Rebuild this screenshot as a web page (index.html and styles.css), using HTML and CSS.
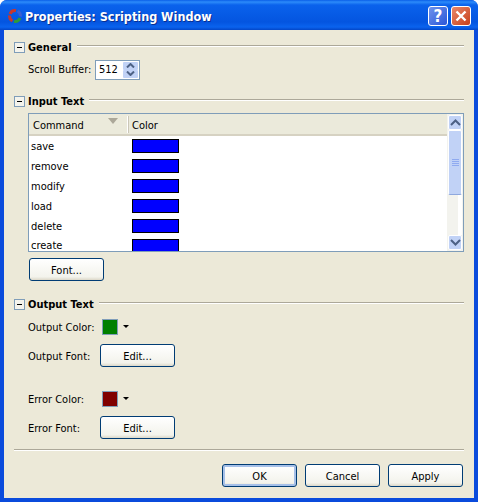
FILE: index.html
```html
<!DOCTYPE html>
<html lang="en">
<head>
    <meta charset="UTF-8">
    <meta name="viewport" content="width=device-width, initial-scale=1.0">
    <title>Properties: Scripting Window</title>
    <link rel="stylesheet" href="styles.css">
</head>
<body>
    <div class="window">
        <div class="titlebar">
            <svg class="app-icon" width="16" height="16" viewBox="0 0 16 16">
                <path d="M3 6 A5.5 5.5 0 0 1 9 2.6" fill="none" stroke="#c8372c" stroke-width="3"/>
                <path d="M10.5 3 A5.5 5.5 0 0 1 13.4 8.5" fill="none" stroke="#3a5fd0" stroke-width="3"/>
                <path d="M13 10 A5.5 5.5 0 0 1 7 13.4" fill="none" stroke="#2f9a3c" stroke-width="3"/>
                <path d="M5.5 13 A5.5 5.5 0 0 1 2.6 7.5" fill="none" stroke="#c8372c" stroke-width="3"/>
            </svg>
            <span class="title">Properties: Scripting Window</span>
            <div class="title-btn help">?</div>
            <div class="title-btn close">
                <svg width="12" height="12" viewBox="0 0 12 12">
                    <path d="M1.5 1.5 L10.5 10.5 M10.5 1.5 L1.5 10.5" stroke="#fff" stroke-width="2.4"/>
                </svg>
            </div>
        </div>

        <div class="content">
            <div class="section-head first">
                <span class="toggle"></span>
                <b>General</b>
                <span class="rule"></span>
            </div>
            <div class="row scroll-row">
                <span class="scroll-label">Scroll Buffer:</span>
                <div class="spinner">
                    <span class="spin-value">512</span>
                    <div class="spin-btns">
                        <span class="spin-btn">
                            <svg width="9" height="5" viewBox="0 0 9 5"><path d="M1 4.5 L4.5 1 L8 4.5" fill="none" stroke="#4d6185" stroke-width="2"/></svg>
                        </span>
                        <span class="spin-btn">
                            <svg width="9" height="5" viewBox="0 0 9 5"><path d="M1 .5 L4.5 4 L8 .5" fill="none" stroke="#4d6185" stroke-width="2"/></svg>
                        </span>
                    </div>
                </div>
            </div>

            <div class="section-head input-head">
                <span class="toggle"></span>
                <b>Input Text</b>
                <span class="rule"></span>
            </div>
            <div class="table">
                <div class="table-main">
                    <div class="table-header">
                        <div class="col-command">Command<span class="sort-arrow"></span></div>
                        <div class="col-color">Color</div>
                    </div>
                    <div class="table-rows">
                        <div class="table-row"><span class="cmd">save</span><span class="swatch-blue"></span></div>
                        <div class="table-row"><span class="cmd">remove</span><span class="swatch-blue"></span></div>
                        <div class="table-row"><span class="cmd">modify</span><span class="swatch-blue"></span></div>
                        <div class="table-row"><span class="cmd">load</span><span class="swatch-blue"></span></div>
                        <div class="table-row"><span class="cmd">delete</span><span class="swatch-blue"></span></div>
                        <div class="table-row last-row"><span class="cmd">create</span><span class="swatch-blue"></span></div>
                    </div>
                </div>
                <div class="scrollbar">
                    <span class="sb-btn">
                        <svg width="11" height="7" viewBox="0 0 11 7"><path d="M1 6 L5.5 1.5 L10 6" fill="none" stroke="#4d6185" stroke-width="2"/></svg>
                    </span>
                    <span class="sb-thumb">
                        <span class="grip"></span><span class="grip"></span><span class="grip"></span><span class="grip"></span>
                    </span>
                    <span class="sb-track"></span>
                    <span class="sb-btn">
                        <svg width="11" height="7" viewBox="0 0 11 7"><path d="M1 1 L5.5 5.5 L10 1" fill="none" stroke="#4d6185" stroke-width="2"/></svg>
                    </span>
                </div>
            </div>
            <div class="font-row">
                <button class="btn">Font...</button>
            </div>

            <div class="section-head output-head">
                <span class="toggle"></span>
                <b>Output Text</b>
                <span class="rule"></span>
            </div>
            <div class="row color-row output-color">
                <span class="label">Output Color:</span>
                <span class="color-box green"></span>
                <span class="caret"></span>
            </div>
            <div class="row btn-row">
                <span class="label">Output Font:</span>
                <button class="btn">Edit...</button>
            </div>
            <div class="row color-row error-color">
                <span class="label">Error Color:</span>
                <span class="color-box red"></span>
                <span class="caret"></span>
            </div>
            <div class="row btn-row">
                <span class="label">Error Font:</span>
                <button class="btn">Edit...</button>
            </div>

            <div class="separator"></div>
            <div class="footer">
                <button class="btn default">OK</button>
                <button class="btn">Cancel</button>
                <button class="btn">Apply</button>
            </div>
        </div>
    </div>
</body>
</html>
```

FILE: styles.css
```css
* {
    box-sizing: border-box;
}

body {
    margin: 0;
    font-family: "DejaVu Sans Condensed", "DejaVu Sans", sans-serif;
    font-stretch: condensed;
    font-size: 11px;
    color: #000;
}

.window {
    width: 478px;
    height: 502px;
    display: flex;
    flex-direction: column;
    background: #0a4bdc;
    padding: 0 4px 4px;
    border-radius: 7px 7px 0 0;
    overflow: hidden;
}

.titlebar {
    height: 30px;
    margin: 0 -4px;
    padding: 2px 7px 0 7px;
    display: flex;
    align-items: center;
    background: linear-gradient(#0a5fe8 0, #2c8bfa 2px, #0a62ec 5px, #0455e0 22px, #0a63ee 27px, #0346c8 30px);
}

.app-icon {
    margin-right: 2px;
    flex: none;
}

.title {
    flex: 1;
    color: #fff;
    font-weight: bold;
    font-size: 12.5px;
    text-shadow: 1px 1px 0 #0a2f90;
}

.title-btn {
    width: 20px;
    height: 20px;
    margin-left: 3px;
    border: 1px solid #fff;
    border-radius: 3px;
    display: flex;
    align-items: center;
    justify-content: center;
    color: #fff;
    font-weight: bold;
    font-size: 17px;
}

.help {
    background: linear-gradient(135deg, #6f93ec, #2a56d8);
}

.close {
    background: linear-gradient(135deg, #e9876a, #c8401a);
}

.content {
    flex: 1;
    background: #ece9d8;
    padding: 0 10px;
    display: flex;
    flex-direction: column;
}

.section-head {
    height: 14px;
    display: flex;
    align-items: center;
}

.section-head b {
    margin-left: 3px;
    margin-right: 5px;
    font-size: 11px;
}

.section-head.first {
    margin-top: 10px;
}

.input-head {
    margin-top: 14px;
}

.output-head {
    margin-top: 16px;
}

.toggle {
    width: 11px;
    height: 11px;
    flex: none;
    border: 1px solid #7f9db9;
    background: linear-gradient(transparent 4px, #000 4px, #000 5px, transparent 5px) 2px 0 / 5px 100% no-repeat, #f4f3ec;
}

.rule {
    flex: 1;
    height: 2px;
    margin-top: -3px;
    border-top: 1px solid #aca899;
    border-bottom: 1px solid #fff;
}

.row {
    display: flex;
    align-items: center;
    padding-left: 14px;
}

.scroll-row {
    margin-top: 5px;
    height: 21px;
}

.scroll-label {
    width: 67px;
    flex: none;
    margin-top: -1px;
}

.spinner {
    width: 45px;
    height: 20px;
    border: 1px solid #7f9db9;
    background: #fff;
    display: flex;
    align-items: center;
    padding: 1px;
}

.spin-value {
    flex: 1;
    padding-left: 2px;
}

.spin-btns {
    width: 15px;
    height: 16px;
    display: flex;
    flex-direction: column;
}

.spin-btn {
    flex: 1;
    display: flex;
    align-items: center;
    justify-content: center;
    background: #c1d2f6;
    border-radius: 1px;
}

.table {
    margin: 5px 0 0 14px;
    width: 436px;
    height: 139px;
    border: 1px solid #7f9db9;
    display: flex;
    overflow: hidden;
    background: #fff;
}

.table-main {
    flex: 1;
    min-width: 0;
}

.table-header {
    height: 22px;
    display: flex;
    align-items: center;
    background: #ebeadb;
    border-bottom: 2px solid #d6d2c2;
}

.col-command {
    width: 99px;
    height: 17px;
    padding: 2px 0 0 4px;
    border-right: 1px solid #fff;
    box-shadow: 1px 0 0 #cbc7b8;
    display: flex;
    align-items: center;
    justify-content: space-between;
}

.sort-arrow {
    width: 0;
    height: 0;
    margin: -8px 9px 0 0;
    border-left: 5px solid transparent;
    border-right: 5px solid transparent;
    border-top: 6px solid #aca899;
}

.col-color {
    padding: 2px 0 0 4px;
}

.table-rows {
    height: 115px;
    overflow: hidden;
}

.table-row {
    height: 20px;
    display: flex;
    align-items: center;
    padding-left: 2px;
}

/* last row only shows partly, keep its text inside the list */
.last-row {
    height: 16px;
    align-items: flex-start;
}

.cmd {
    width: 101px;
}

.last-row .cmd {
    margin-top: 3px;
}

.swatch-blue {
    width: 47px;
    height: 14px;
    background: #0000ff;
    border: 1px solid #000;
}

.last-row .swatch-blue {
    margin-top: 3px;
}

.scrollbar {
    width: 16px;
    flex: none;
    display: flex;
    flex-direction: column;
    padding: 1px;
    background: #f3f3ee;
}

.sb-btn {
    height: 15px;
    flex: none;
    display: flex;
    align-items: center;
    justify-content: center;
    background: #c1d2f6;
    border: 1px solid #fff;
    border-radius: 2px;
}

.sb-thumb {
    height: 65px;
    flex: none;
    display: flex;
    flex-direction: column;
    align-items: center;
    justify-content: center;
    gap: 1px;
    background: #c1d2f6;
    border: 1px solid #fff;
    border-bottom-color: #8fa8de;
    border-radius: 2px;
}

.grip {
    width: 7px;
    height: 1px;
    background: #8faaf0;
}

.sb-track {
    flex: 1;
    background: linear-gradient(90deg, #f3f3ee 70%, #fff 70%);
}

.btn {
    width: 75px;
    height: 23px;
    padding: 1px 0 0;
    font: inherit;
    color: #000;
    border: 1px solid #003c74;
    border-radius: 3px;
    background: linear-gradient(#fff, #f3f3ec 85%, #dcd8c8);
}

.btn.default {
    box-shadow: inset 0 0 0 2px #a6c0e8;
}

.font-row {
    margin: 6px 0 0 15px;
}

.label {
    width: 72px;
    flex: none;
}

.color-row {
    height: 16px;
}

.output-color {
    margin-top: 8px;
}

.error-color {
    margin-top: 24px;
}

.btn-row {
    margin-top: 9px;
    height: 23px;
}

.btn-row .label {
    padding-top: 2px;
}

.color-box {
    width: 16px;
    height: 16px;
    margin-left: 2px;
    border: 1px solid #7f9db9;
}

.green {
    background: #008000;
}

.red {
    background: #800000;
}

.caret {
    width: 0;
    height: 0;
    margin-left: 5px;
    margin-top: -1px;
    border-left: 3px solid transparent;
    border-right: 3px solid transparent;
    border-top: 3px solid #000;
}

.separator {
    margin-top: 10px;
    height: 2px;
    border-top: 1px solid #aca899;
    border-bottom: 1px solid #fff;
}

.footer {
    margin-top: 13px;
    display: flex;
    justify-content: flex-end;
    gap: 8px;
    padding-right: 1px;
}
```
